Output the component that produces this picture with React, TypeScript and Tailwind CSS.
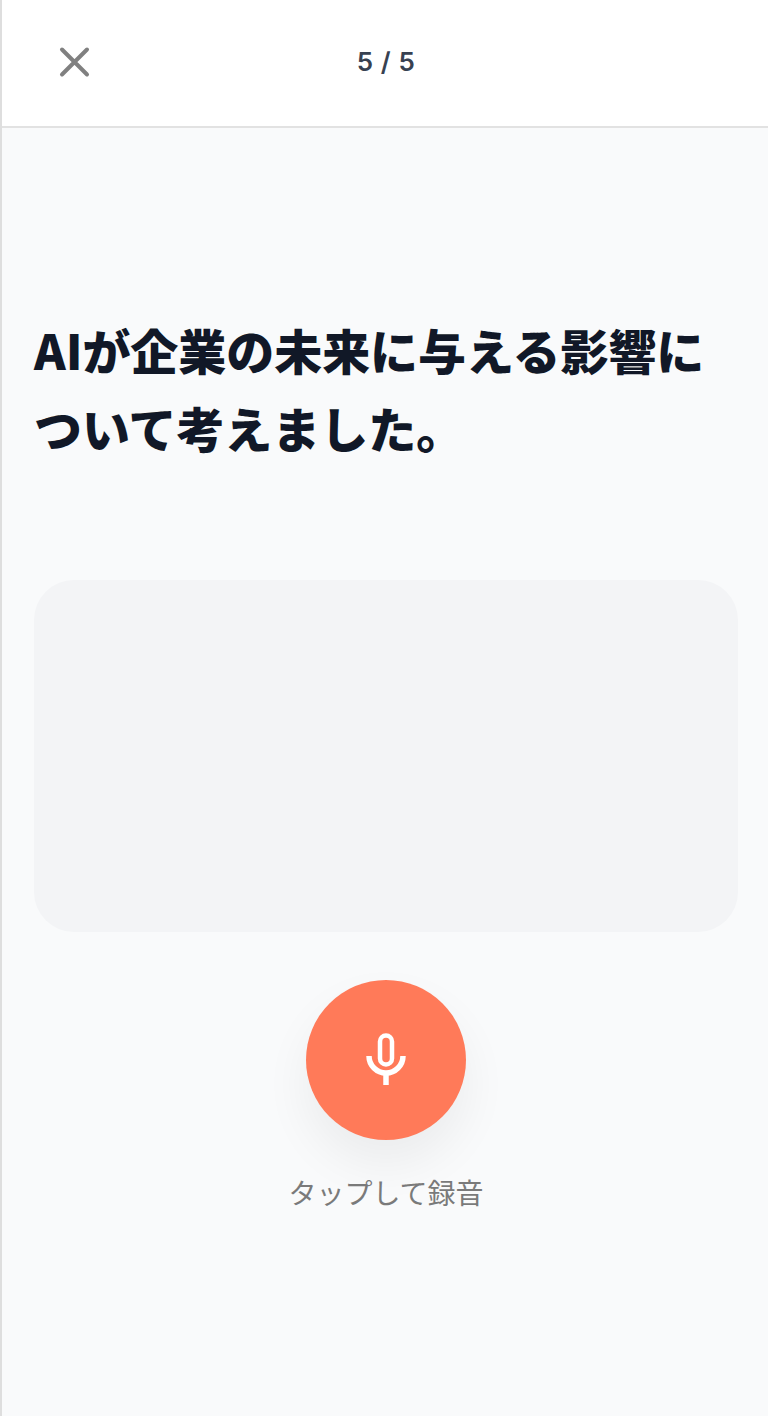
export default function App() {
  return (
    <div className="min-h-[1416px] bg-[#f9fafb] border-l-2 border-[#dedede] flex flex-col" style={{ fontFamily: '"Noto Sans CJK JP", sans-serif' }}>
      {/* Header */}
      <div className="relative h-[128px] bg-white border-b-2 border-[#e2e2e2] flex items-center justify-center shrink-0">
        <button className="absolute left-[56px] top-[46px] w-[32px] h-[32px] text-[#808080]">
          <svg viewBox="0 0 32 32" className="w-[32px] h-[32px]" fill="none" stroke="currentColor" strokeWidth="4" strokeLinecap="round">
            <path d="M4 3.5 L29 28.5 M29 3.5 L4 28.5" />
          </svg>
        </button>
        <span className="text-[26px] leading-[38px] font-semibold text-[#374151] font-[Inter] tracking-[0.6px] mb-[2px] ml-[2px]">5 / 5</span>
      </div>

      <div className="flex flex-col pl-[32px] pr-[30px]">
        <h1 className="mt-[182px] text-[48px] leading-[78px] font-black text-[#111827] tracking-[-0.05px]">
          AIが企業の未来に与える影響に<br />ついて考えました。
        </h1>

        <div className="mt-[114px] h-[352px] rounded-[40px] bg-[#f3f4f6]" />

        {/* Record */}
        <div className="mt-[48px] flex flex-col items-center">
          <button className="w-[160px] h-[160px] rounded-full bg-[#ff7a59] flex items-center justify-center shadow-[0_24px_48px_rgba(0,0,0,0.06)]">
            <svg viewBox="0 0 40 52" className="w-[40px] h-[52px] -mt-[2px]" fill="none" stroke="#ffffff">
              <rect x="14" y="2.5" width="12" height="29" rx="6" strokeWidth="4.5" />
              <path d="M3 23 a17 17 0 0 0 34 0" strokeWidth="5.5" />
              <path d="M20 41 V52" strokeWidth="5.5" />
            </svg>
          </button>
          <span className="mt-[32px] text-[28px] leading-[40px] text-[#7a7a7a]">タップして録音</span>
        </div>
      </div>
    </div>
  )
}
